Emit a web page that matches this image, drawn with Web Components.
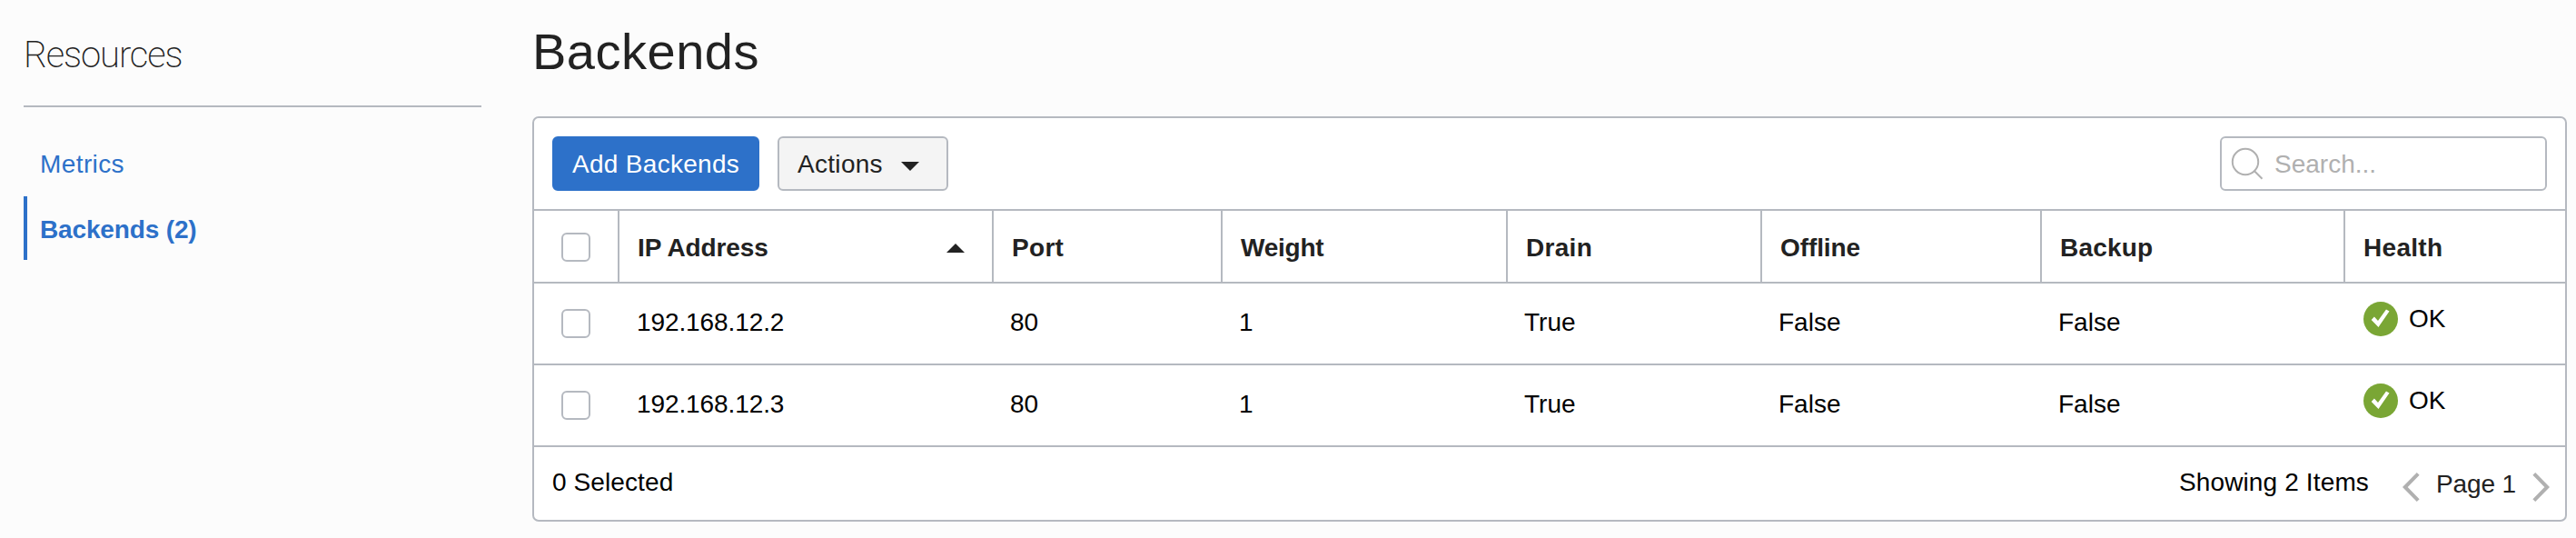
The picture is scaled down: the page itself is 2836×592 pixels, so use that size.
<!DOCTYPE html>
<html lang="en">
<head>
<meta charset="utf-8">
<title>Backends</title>
<style>
  html, body { margin: 0; padding: 0; }
  body {
    width: 2836px; height: 592px; overflow: hidden; background: #fcfcfc;
    font: 28px/32px "Liberation Sans", Arial, sans-serif; color: #000;
    --line: #b5b9c0; --ink: #222; --blue: #2d71c9;
    --cols: 94px 412px 252px 314px 280px 308px 334px 1fr;
  }
</style>
</head>
<body>
<lb-page>
  <lb-sidebar slot="side" heading="Resources">
    <lb-link style="letter-spacing:.4px">Metrics</lb-link>
    <lb-link active style="letter-spacing:-.15px">Backends (2)</lb-link>
  </lb-sidebar>
  <lb-panel heading="Backends">
    <lb-toolbar>
      <lb-button primary style="width:228px;letter-spacing:.3px">Add Backends</lb-button>
      <lb-button menu style="width:188px;letter-spacing:.3px">Actions</lb-button>
      <lb-search slot="end">Search...</lb-search>
    </lb-toolbar>
    <lb-head>
      <lb-th><lb-checkbox></lb-checkbox></lb-th>
      <lb-th sorted style="letter-spacing:-.1px">IP Address</lb-th>
      <lb-th style="letter-spacing:.3px">Port</lb-th>
      <lb-th style="letter-spacing:-.25px">Weight</lb-th>
      <lb-th style="letter-spacing:.3px">Drain</lb-th>
      <lb-th style="letter-spacing:-.1px">Offline</lb-th>
      <lb-th style="letter-spacing:.2px">Backup</lb-th>
      <lb-th style="letter-spacing:.3px">Health</lb-th>
    </lb-head>
    <lb-row ip="192.168.12.2" port="80" weight="1" drain="True" offline="False" backup="False" health="OK"></lb-row>
    <lb-row ip="192.168.12.3" port="80" weight="1" drain="True" offline="False" backup="False" health="OK"></lb-row>
    <lb-footer>
      <span style="letter-spacing:.1px">0 Selected</span>
      <span slot="count" style="letter-spacing:.14px">Showing 2 Items</span>
      <lb-pager slot="pager">Page 1</lb-pager>
    </lb-footer>
  </lb-panel>
</lb-page>
<script>
const define = (name, html) => customElements.define(name, class extends HTMLElement {
  constructor() {
    super();
    this.attachShadow({ mode: "open" });
  }
  connectedCallback() {
    this.shadowRoot.innerHTML = typeof html === "function" ? html(this) : html;
  }
});

define("lb-page", `
<style>
  :host { display: grid; grid-template-columns: 504px 2240px; column-gap: 56px; padding-left: 26px; }
</style>
<slot name="side"></slot><slot></slot>`);

define("lb-sidebar", el => `
<style>
  :host { display: block; padding-top: 38px; }
  h2 { margin: 0; height: 80px; box-sizing: border-box; border-bottom: 2px solid var(--line);
       font: 200 40px/46px Roboto, sans-serif; color: var(--ink); letter-spacing: -1.1px; }
  nav { display: flex; flex-direction: column; gap: 2px; padding-top: 26px; }
</style>
<h2>${el.getAttribute("heading")}</h2>
<nav><slot></slot></nav>`);

define("lb-link", `
<style>
  :host { display: block; height: 70px; line-height: 74px; box-sizing: border-box; padding-left: 14px;
          border-left: 4px solid transparent; color: var(--blue); }
  :host([active]) { border-color: var(--blue); font-weight: bold; }
</style>
<slot></slot>`);

define("lb-panel", el => `
<style>
  :host { display: block; }
  h1 { margin: 0; height: 128px; font-size: 56px; line-height: 114px; font-weight: normal;
       letter-spacing: .5px; color: var(--ink); }
  section { height: 446px; box-sizing: border-box; border: 2px solid var(--line); border-radius: 7px;
            background: #fff; overflow: hidden; }
</style>
<h1>${el.getAttribute("heading")}</h1>
<section><slot></slot></section>`);

define("lb-toolbar", `
<style>
  :host { display: flex; align-items: center; gap: 20px; height: 102px; box-sizing: border-box;
          padding: 0 20px; border-bottom: 2px solid var(--line); }
  .gap { flex: 1; }
</style>
<slot></slot><div class="gap"></div><slot name="end"></slot>`);

define("lb-button", el => `
<style>
  :host { display: flex; align-items: center; gap: 20px; height: 60px; box-sizing: border-box; padding: 0 0 0 20px;
          border: 2px solid var(--line); border-radius: 6px; background: #f4f4f4; color: var(--ink); }
  :host([primary]) { background: var(--blue); border-color: var(--blue); color: #fff; }
  span { padding-top: 2px; }
  svg { margin-top: 6px; }
</style>
<span><slot></slot></span>
${el.hasAttribute("menu") ? `<svg width="20" height="10" viewBox="0 0 20 10"><path fill="#222" d="M0 0h20L10 10z"/></svg>` : ""}`);

define("lb-search", `
<style>
  :host { display: flex; align-items: center; gap: 12px; width: 360px; height: 60px; box-sizing: border-box;
          padding-left: 10px; border: 2px solid var(--line); border-radius: 6px; color: #b0b0b0; }
  span { padding-top: 2px; }
</style>
<svg width="36" height="36" viewBox="0 0 36 36" fill="none" stroke="#b0b0b0" stroke-width="2">
  <circle cx="16" cy="16" r="14.2"/><path d="M25.5 25.8l9 9"/>
</svg>
<span><slot></slot></span>`);

define("lb-checkbox", `
<style>
  :host { display: block; width: 32px; height: 32px; box-sizing: border-box; border: 2px solid var(--line);
          border-radius: 6px; background: #fff; }
</style>`);

define("lb-head", `
<style>
  :host { display: grid; grid-template-columns: var(--cols); height: 80px; box-sizing: border-box;
          border-bottom: 2px solid var(--line); font-weight: bold; color: var(--ink); }
</style>
<slot></slot>`);

define("lb-th", el => `
<style>
  :host { display: flex; align-items: center; justify-content: space-between; box-sizing: border-box;
          padding: 4px 30px 0 20px; border-right: 2px solid var(--line); }
  :host(:first-child) { padding: 2px 0 0 30px; }
  :host(:last-child) { border-right: 0; }
</style>
<span><slot></slot></span>
${el.hasAttribute("sorted") ? `<svg width="20" height="10" viewBox="0 0 20 10"><path fill="#222" d="M0 10h20L10 0z"/></svg>` : ""}`);

define("lb-status", `
<style>
  :host { display: flex; align-items: center; gap: 12px; }
</style>
<svg width="38" height="38" viewBox="0 0 38 38">
  <circle cx="19" cy="19" r="19" fill="#7aa635"/>
  <path fill="#fff" d="M8.7 20l3.2-3.4 4.1 4.4L25 8.4l3.5 2.1L16.5 28z"/>
</svg>
<span><slot></slot></span>`);

define("lb-row", el => {
  const cells = ["ip", "port", "weight", "drain", "offline", "backup"]
    .map(key => `<div class="cell ${key}">${el.getAttribute(key)}</div>`).join("");
  return `
<style>
  :host { display: grid; grid-template-columns: var(--cols); align-items: center; height: 90px;
          box-sizing: border-box; border-bottom: 2px solid var(--line); }
  lb-checkbox { margin-left: 30px; }
  .cell { padding: 0 18px 2px; }
  .ip { padding-left: 19px; letter-spacing: -.1px; }
  lb-status { padding: 0 0 10px 20px; }
</style>
<lb-checkbox></lb-checkbox>${cells}<lb-status>${el.getAttribute("health")}</lb-status>`;
});

define("lb-footer", `
<style>
  :host { display: flex; align-items: center; height: 80px; padding: 0 17px 0 20px; box-sizing: border-box; }
  .text { padding-bottom: 2px; }
  .gap { flex: 1; }
  .pager { margin-left: 37px; padding-top: 8px; }
</style>
<div class="text"><slot></slot></div><div class="gap"></div>
<div class="text"><slot name="count"></slot></div>
<div class="pager"><slot name="pager"></slot></div>`);

define("lb-pager", `
<style>
  :host { display: flex; align-items: center; justify-content: space-between; width: 162px; color: var(--ink); }
  svg { fill: none; stroke: #b0b0b0; stroke-width: 4; }
  span { padding-bottom: 6px; letter-spacing: -.1px; }
</style>
<svg width="19" height="32" viewBox="0 0 19 32"><path d="M17.2 1.4L2.8 16l14.4 14.6"/></svg>
<span><slot></slot></span>
<svg width="19" height="32" viewBox="0 0 19 32"><path d="M1.8 1.4L16.2 16 1.8 30.6"/></svg>`);
</script>
</body>
</html>
